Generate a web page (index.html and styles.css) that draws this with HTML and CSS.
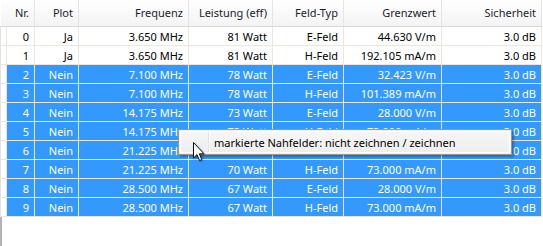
FILE: index.html
```html
<!DOCTYPE html>
<html lang="de">
<head>
    <meta charset="UTF-8">
    <title>Nahfelder</title>
    <link rel="stylesheet" href="styles.css">
</head>
<body>
    <div class="view">
        <table class="grid">
            <colgroup>
                <col class="c-gutter">
                <col class="c-nr">
                <col class="c-plot">
                <col class="c-freq">
                <col class="c-power">
                <col class="c-type">
                <col class="c-limit">
                <col class="c-safety">
            </colgroup>
            <thead>
                <tr>
                    <th colspan="2">Nr.</th>
                    <th>Plot</th>
                    <th>Frequenz</th>
                    <th>Leistung (eff)</th>
                    <th>Feld-Typ</th>
                    <th>Grenzwert</th>
                    <th>Sicherheit</th>
                </tr>
            </thead>
            <tbody>
                <tr><td class="gutter"></td><td>0</td><td>Ja</td><td>3.650 MHz</td><td>81 Watt</td><td>E-Feld</td><td>44.630 V/m</td><td>3.0 dB</td></tr>
                <tr><td class="gutter"></td><td>1</td><td>Ja</td><td>3.650 MHz</td><td>81 Watt</td><td>H-Feld</td><td>192.105 mA/m</td><td>3.0 dB</td></tr>
                <tr class="sel"><td class="gutter"></td><td>2</td><td>Nein</td><td>7.100 MHz</td><td>78 Watt</td><td>E-Feld</td><td>32.423 V/m</td><td>3.0 dB</td></tr>
                <tr class="sel"><td class="gutter"></td><td>3</td><td>Nein</td><td>7.100 MHz</td><td>78 Watt</td><td>H-Feld</td><td>101.389 mA/m</td><td>3.0 dB</td></tr>
                <tr class="sel"><td class="gutter"></td><td>4</td><td>Nein</td><td>14.175 MHz</td><td>73 Watt</td><td>E-Feld</td><td>28.000 V/m</td><td>3.0 dB</td></tr>
                <tr class="sel"><td class="gutter"></td><td>5</td><td>Nein</td><td>14.175 MHz</td><td>73 Watt</td><td>H-Feld</td><td>73.000 mA/m</td><td>3.0 dB</td></tr>
                <tr class="sel"><td class="gutter"></td><td>6</td><td>Nein</td><td>21.225 MHz</td><td>70 Watt</td><td>E-Feld</td><td>28.000 V/m</td><td>3.0 dB</td></tr>
                <tr class="sel"><td class="gutter"></td><td>7</td><td>Nein</td><td>21.225 MHz</td><td>70 Watt</td><td>H-Feld</td><td>73.000 mA/m</td><td>3.0 dB</td></tr>
                <tr class="sel"><td class="gutter"></td><td>8</td><td>Nein</td><td>28.500 MHz</td><td>67 Watt</td><td>E-Feld</td><td>28.000 V/m</td><td>3.0 dB</td></tr>
                <tr class="sel focus"><td class="gutter"></td><td>9</td><td>Nein</td><td>28.500 MHz</td><td>67 Watt</td><td>H-Feld</td><td>73.000 mA/m</td><td>3.0 dB</td></tr>
            </tbody>
        </table>
        <div class="rest"></div>

        <div class="menu">
            <div class="menu-item">
                <span class="menu-icon"></span>
                <span class="menu-label">markierte Nahfelder: nicht zeichnen / zeichnen</span>
            </div>
        </div>

        <svg class="cursor" width="13" height="21" viewBox="0 0 13 21">
            <path d="M1.5 1.5 L1.5 17 L5 13.6 L7.6 19.6 L9.8 18.6 L7.3 12.8 L12 12.8 Z" fill="#fff" stroke="#111" stroke-width="1" stroke-linejoin="miter"/>
        </svg>
    </div>
</body>
</html>
```

FILE: styles.css
```css
body {
    margin: 0;
    background: #fff;
    font-family: "Noto Sans", "Liberation Sans", sans-serif;
    font-size: 11px;
}

.view {
    position: relative;
    display: flex;
    flex-direction: column;
    width: 543px;
    height: 246px;
    overflow: hidden;
    background: #fff;
}

/* empty space under the list, with the window edge on the left */
.rest {
    flex: 1;
    border-left: 2px solid #b4b4b4;
}

.grid {
    border-collapse: collapse;
    table-layout: fixed;
    width: 541px;
}

.c-gutter { width: 6px; }
.c-nr { width: 28px; }
.c-plot { width: 44px; }
.c-freq { width: 110px; }
.c-power { width: 84px; }
.c-type { width: 71px; }
.c-limit { width: 98px; }
.c-safety { width: 100px; }

.grid th {
    height: 25px;
    padding: 0 5px 1px 0;
    text-align: right;
    font-weight: normal;
    color: #1c1c2a;
    background: linear-gradient(#ffffff, #f3f3f4);
    border-right: 1px solid #e4e5e8;
    border-bottom: 1px solid #d8d8da;
    white-space: nowrap;
    overflow: hidden;
}

.grid td {
    height: 18px;
    padding: 0 5px 0 0;
    text-align: right;
    color: #000;
    border: 1px solid #ebe7df;
    border-top: 0;
    white-space: nowrap;
    overflow: hidden;
}

.grid td.gutter {
    padding: 0;
    background: #fff;
    border-left: 1px solid #e2e2e2;
}

.grid tr.sel td {
    background: #3399ff;
    color: #fff;
}

.grid tr.sel td.gutter {
    background: #fff;
}

.grid tr.focus td:nth-child(2) {
    border-left: 1px dotted #c8762a;
}

.menu {
    position: absolute;
    left: 178px;
    top: 129px;
    width: 330px;
    height: 22px;
    padding: 1px;
    background: #f0f0f0;
    border: 1px solid #979797;
    box-shadow: 2px 2px 2px rgba(0, 0, 0, 0.3);
}

.menu-item {
    display: flex;
    align-items: center;
    height: 22px;
    border: 1px solid #fff;
    box-sizing: border-box;
    background: linear-gradient(#f6f6f6, #eeeeee);
}

.menu-icon {
    width: 27px;
    height: 100%;
    border-right: 1px solid #e2e3e3;
    box-shadow: 1px 0 0 #fff;
}

.menu-label {
    padding-left: 5px;
    color: #000;
    font-size: 11px;
}

.cursor {
    position: absolute;
    left: 192px;
    top: 141px;
    filter: drop-shadow(1px 1px 1px rgba(0, 0, 0, 0.35));
}
```
